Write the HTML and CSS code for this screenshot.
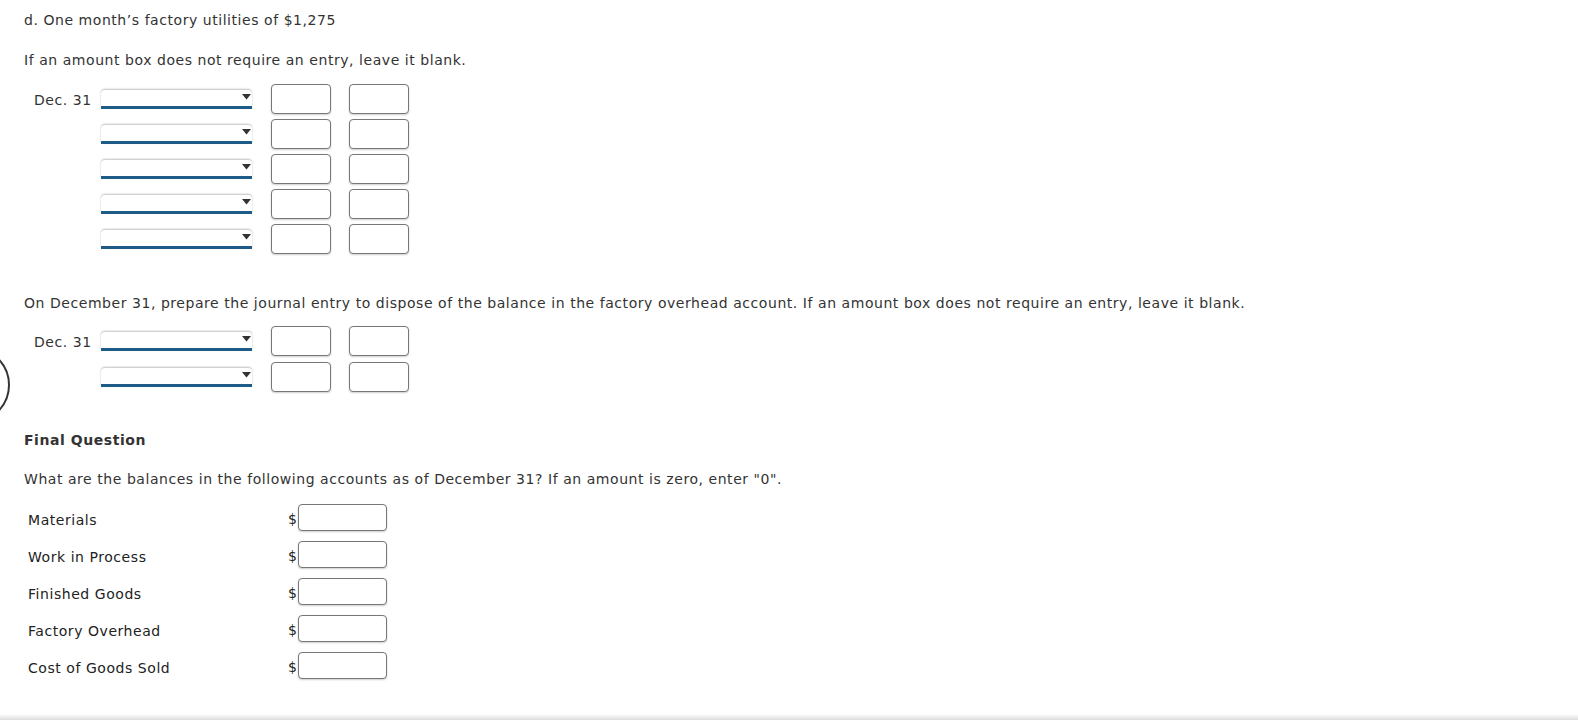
FILE: index.html
```html
<!DOCTYPE html>
<html>
<head>
<meta charset="utf-8">
<link rel="stylesheet" href="styles.css">
</head>
<body>
<div class="page">
  <p class="intro">d. One month’s factory utilities of $1,275</p>
  <p class="instr">If an amount box does not require an entry, leave it blank.</p>
  <div class="journal">
    <div class="jrow"><span class="date">Dec. 31</span><div class="sel"><svg width="9" height="6" viewBox="0 0 9 6"><path d="M0 0H9L4.5 5.5Z" fill="#333"/></svg></div><span class="box"></span><span class="box"></span></div>
    <div class="jrow"><span class="date"></span><div class="sel"><svg width="9" height="6" viewBox="0 0 9 6"><path d="M0 0H9L4.5 5.5Z" fill="#333"/></svg></div><span class="box"></span><span class="box"></span></div>
    <div class="jrow"><span class="date"></span><div class="sel"><svg width="9" height="6" viewBox="0 0 9 6"><path d="M0 0H9L4.5 5.5Z" fill="#333"/></svg></div><span class="box"></span><span class="box"></span></div>
    <div class="jrow"><span class="date"></span><div class="sel"><svg width="9" height="6" viewBox="0 0 9 6"><path d="M0 0H9L4.5 5.5Z" fill="#333"/></svg></div><span class="box"></span><span class="box"></span></div>
    <div class="jrow"><span class="date"></span><div class="sel"><svg width="9" height="6" viewBox="0 0 9 6"><path d="M0 0H9L4.5 5.5Z" fill="#333"/></svg></div><span class="box"></span><span class="box"></span></div>
  </div>

  <p class="instr2">On December 31, prepare the journal entry to dispose of the balance in the factory overhead account. If an amount box does not require an entry, leave it blank.</p>
  <div class="journal j2">
    <div class="jrow"><span class="date">Dec. 31</span><div class="sel"><svg width="9" height="6" viewBox="0 0 9 6"><path d="M0 0H9L4.5 5.5Z" fill="#333"/></svg></div><span class="box"></span><span class="box"></span></div>
    <div class="jrow"><span class="date"></span><div class="sel"><svg width="9" height="6" viewBox="0 0 9 6"><path d="M0 0H9L4.5 5.5Z" fill="#333"/></svg></div><span class="box"></span><span class="box"></span></div>
  </div>

  <p class="final-title">Final Question</p>
  <p class="final-q">What are the balances in the following accounts as of December 31? If an amount is zero, enter "0".</p>
  <div class="balances">
    <div class="brow"><span class="blabel">Materials</span><span class="dollar">$</span><span class="bbox"></span></div>
    <div class="brow"><span class="blabel">Work in Process</span><span class="dollar">$</span><span class="bbox"></span></div>
    <div class="brow"><span class="blabel">Finished Goods</span><span class="dollar">$</span><span class="bbox"></span></div>
    <div class="brow"><span class="blabel">Factory Overhead</span><span class="dollar">$</span><span class="bbox"></span></div>
    <div class="brow"><span class="blabel">Cost of Goods Sold</span><span class="dollar">$</span><span class="bbox"></span></div>
  </div>
</div>
<div class="ring"></div>
<div class="footer-shadow"></div>
</body>
</html>
```

FILE: styles.css
```css
html, body {
  margin: 0;
  padding: 0;
  background: #fff;
}
body {
  font-family: "DejaVu Sans", Verdana, sans-serif;
  font-size: 14px;
  line-height: 20px;
  letter-spacing: 0.55px;
  color: #333;
  overflow: hidden;
  height: 720px;
  position: relative;
}
.page {
  padding: 10px 24px 0 24px;
}
p {
  margin: 0;
}
.instr {
  margin-top: 20px;
}
.journal {
  margin-top: 14px;
  display: flex;
  flex-direction: column;
  gap: 5px;
}
.jrow {
  display: flex;
  align-items: center;
  height: 30px;
}
.date {
  width: 67px;
  padding-left: 10px;
  padding-top: 2px;
  flex: none;
  white-space: nowrap;
}
.sel {
  width: 151px;
  height: 16px;
  box-sizing: content-box;
  background: #fff;
  border-radius: 4px 4px 0 0;
  box-shadow: 0 -1px 2px rgba(0,0,0,0.25);
  border-bottom: 3px solid #1f5b88;
  display: flex;
  justify-content: flex-end;
  align-items: center;
  margin-right: 19px;
  flex: none;
}
.sel svg {
  margin-right: 1px;
  margin-top: -2px;
}
.box {
  width: 58px;
  height: 28px;
  border: 1px solid #777;
  border-radius: 4px;
  box-shadow: 0 1px 2px rgba(0,0,0,0.2);
  margin-right: 18px;
  flex: none;
  background: #fff;
}
.instr2 {
  margin-top: 39px;
}
.j2 {
  margin-top: 13px;
  gap: 6px;
}
.final-title {
  margin-top: 38px;
  font-weight: bold;
}
.final-q {
  margin-top: 19px;
}
.balances {
  margin-top: 15px;
  display: flex;
  flex-direction: column;
  gap: 10px;
}
.brow {
  display: flex;
  align-items: center;
  height: 27px;
  color: #222;
}
.blabel {
  width: 260px;
  padding-left: 4px;
  padding-top: 4px;
  flex: none;
}
.dollar {
  width: 10px;
  flex: none;
  padding-top: 2px;
}
.bbox {
  width: 87px;
  height: 25px;
  border: 1px solid #777;
  border-radius: 4px;
  box-shadow: 0 1px 2px rgba(0,0,0,0.2);
  background: #fff;
}
.ring {
  position: absolute;
  left: -66px;
  top: 347px;
  width: 72px;
  height: 72px;
  border: 2px solid #333;
  border-radius: 50%;
}
.footer-shadow {
  position: absolute;
  left: 0;
  right: 0;
  bottom: 0;
  height: 6px;
  background: linear-gradient(#fff, #dcdcdc);
}
```
